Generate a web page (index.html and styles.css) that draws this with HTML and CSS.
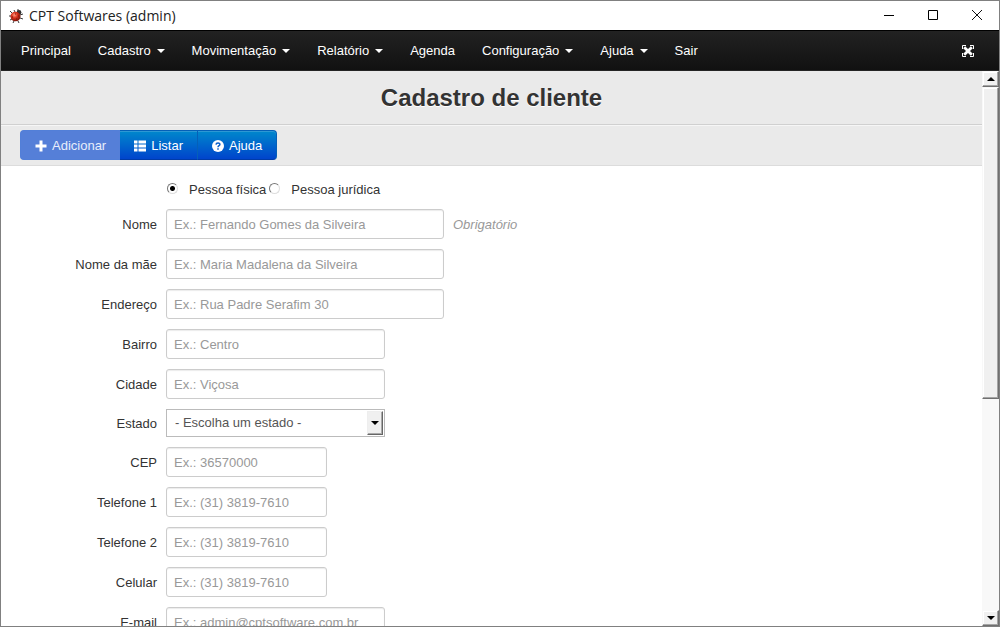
FILE: index.html
```html
<!DOCTYPE html>
<html lang="pt-BR">
<head>
<meta charset="utf-8">
<meta name="viewport" content="width=device-width, initial-scale=1">
<title>CPT Softwares (admin)</title>
<link rel="stylesheet" href="styles.css">
</head>
<body>
<div class="window">
  <header class="titlebar">
    <svg class="app-icon" width="16" height="16" viewBox="0 0 16 16" aria-hidden="true">
      <defs><radialGradient id="shell" cx="40%" cy="35%" r="65%"><stop offset="0" stop-color="#ff9a80"/><stop offset=".45" stop-color="#d8321c"/><stop offset="1" stop-color="#7a1208"/></radialGradient></defs>
      <path d="M4 5 2 3M3 8H1M4 11l-2 1M6 13l-1 2M10 13l1 2M12 10l3 1M12 7l3-1M7 4 6 2M10 3V1" stroke="#3a3a3a" fill="none"/>
      <circle cx="11" cy="4.500" r="2.400" fill="#333"/>
      <ellipse cx="7.500" cy="8.500" rx="5" ry="4.800" fill="url(#shell)"/>
      <path d="M4 9h1M8 11h1M10 8h1M7 6h1" stroke="#70180e"/>
    </svg>
    <span class="app-title">CPT Softwares (admin)</span>
    <div class="window-buttons">
      <button type="button" aria-label="Minimizar"><svg width="12" height="12" viewBox="0 0 12 12"><path d="M1 5.500h10" stroke="#000" fill="none"/></svg></button>
      <button type="button" aria-label="Maximizar"><svg width="12" height="12" viewBox="0 0 12 12"><path d="M1.500.5h9v9h-9z" stroke="#000" fill="none"/></svg></button>
      <button type="button" aria-label="Fechar"><svg width="12" height="12" viewBox="0 0 12 12"><path d="m1 0 10 10M11 0 1 10" stroke="#111" fill="none"/></svg></button>
    </div>
  </header>

  <nav class="navbar">
    <a href="#">Principal</a>
    <a href="#" class="dropdown">Cadastro</a>
    <a href="#" class="dropdown">Movimentação</a>
    <a href="#" class="dropdown">Relatório</a>
    <a href="#">Agenda</a>
    <a href="#" class="dropdown">Configuração</a>
    <a href="#" class="dropdown">Ajuda</a>
    <a href="#">Sair</a>
    <button type="button" class="fullscreen" aria-label="Tela cheia">
      <svg width="12" height="12" viewBox="0 0 12 12"><path d="M.5 4V.5H4M8 .5h3.500V4M11.500 8v3.500H8M4 11.500H.5V8" stroke="#fff" fill="none"/><path d="m2.200 2.200 7.600 7.600M9.800 2.200 2.200 9.800" stroke="#fff" stroke-width="2.800" fill="none"/></svg>
    </button>
  </nav>

  <div class="body">
    <main class="content">
      <h1 class="page-title">Cadastro de cliente</h1>
      <div class="toolbar">
        <div class="button-group">
          <button type="button" class="tool active"><svg width="12" height="12" viewBox="0 0 12 12"><path d="M4.500.5h3v4h4v3h-4v4h-3v-4h-4v-3h4z" fill="#fff"/></svg>Adicionar</button>
          <button type="button" class="tool"><svg width="12" height="12" viewBox="0 0 12 12"><path d="M0 .5h3.500v3H0zM4.500.5H12v3H4.500zM0 4.500h3.500v3H0zM4.500 4.500H12v3H4.500zM0 8.500h3.500v3H0zM4.500 8.500H12v3H4.500z" fill="#fff"/></svg>Listar</button>
          <button type="button" class="tool"><svg width="12" height="12" viewBox="0 0 12 12"><circle cx="6" cy="6" r="6" fill="#fff"/><path d="M4 4.600C4.200 2.400 8 2.600 7.900 4.500 7.800 5.700 6 5.700 6 7.200M6 8.200v1.500" stroke="#0a5fca" stroke-width="1.500" fill="none"/></svg>Ajuda</button>
        </div>
      </div>

      <form class="client-form">
        <div class="radios">
          <label><input type="radio" name="tipo" checked>Pessoa física</label>
          <label><input type="radio" name="tipo">Pessoa jurídica</label>
        </div>
        <div class="row"><label for="nome">Nome</label><input id="nome" class="large" type="text" placeholder="Ex.: Fernando Gomes da Silveira"><span class="hint">Obrigatório</span></div>
        <div class="row"><label for="mae">Nome da mãe</label><input id="mae" class="large" type="text" placeholder="Ex.: Maria Madalena da Silveira"></div>
        <div class="row"><label for="endereco">Endereço</label><input id="endereco" class="large" type="text" placeholder="Ex.: Rua Padre Serafim 30"></div>
        <div class="row"><label for="bairro">Bairro</label><input id="bairro" class="medium" type="text" placeholder="Ex.: Centro"></div>
        <div class="row"><label for="cidade">Cidade</label><input id="cidade" class="medium" type="text" placeholder="Ex.: Viçosa"></div>
        <div class="row"><label for="estado">Estado</label><span class="select-box medium"><select id="estado"><option>- Escolha um estado -</option></select><span class="select-arrow"></span></span></div>
        <div class="row"><label for="cep">CEP</label><input id="cep" class="small" type="text" placeholder="Ex.: 36570000"></div>
        <div class="row"><label for="tel1">Telefone 1</label><input id="tel1" class="small" type="tel" placeholder="Ex.: (31) 3819-7610"></div>
        <div class="row"><label for="tel2">Telefone 2</label><input id="tel2" class="small" type="tel" placeholder="Ex.: (31) 3819-7610"></div>
        <div class="row"><label for="celular">Celular</label><input id="celular" class="small" type="tel" placeholder="Ex.: (31) 3819-7610"></div>
        <div class="row"><label for="email">E-mail</label><input id="email" class="medium" type="email" placeholder="Ex.: admin@cptsoftware.com.br"></div>
      </form>
    </main>
    <div class="scrollbar">
      <button type="button" class="scroll-button up" aria-label="Rolar para cima"></button>
      <div class="thumb"></div>
      <div class="track"></div>
      <button type="button" class="scroll-button down" aria-label="Rolar para baixo"></button>
    </div>
  </div>
</div>
</body>
</html>
```

FILE: styles.css
```css
* { box-sizing: border-box; }

body {
  margin: 0;
  background: #fff;
  color: #333;
  font: 13px/20px "Liberation Sans", Arial, sans-serif;
}

button, input, select { font: inherit; }
button { margin: 0; padding: 0; border: 0; background: none; }

.window {
  display: flex;
  flex-direction: column;
  height: 100vh;
  border: 1px solid #808080;
  overflow: hidden;
}

/* Title bar */
.titlebar {
  display: flex;
  align-items: center;
  flex: none;
  height: 29px;
  padding-left: 7px;
}
.app-title {
  margin-left: 5px;
  color: #222;
  font: 14px/20px "Open Sans", "Noto Sans", sans-serif;
}
.window-buttons { display: flex; margin-left: auto; }
.window-buttons button {
  display: flex;
  align-items: center;
  justify-content: center;
  width: 44px;
  height: 29px;
}

/* Menu */
.navbar {
  display: flex;
  align-items: center;
  flex: none;
  height: 41px;
  padding: 0 25px 0 20px;
  gap: 27px;
  border-top: 1px solid #000;
  border-bottom: 1px solid #252525;
  background: linear-gradient(#222, #111);
}
.navbar a {
  display: flex;
  align-items: center;
  gap: 6px;
  padding-top: 1px;
  color: #fff;
  text-decoration: none;
}
.dropdown::after {
  content: "";
  border: 4px solid transparent;
  border-top-color: #fff;
  border-bottom: 0;
}
.fullscreen { display: flex; margin-left: auto; }

/* Page */
.body { display: flex; flex: 1; min-height: 0; }
.content { flex: 1; min-width: 0; overflow: hidden; }

.page-title {
  margin: 0;
  padding: 12px 0 11px;
  border-bottom: 1px solid #d0d0d0;
  background: #eaeaea;
  text-align: center;
  font-size: 24px;
  line-height: 30px;
  text-shadow: 0 1px 0 #fff;
}

.toolbar {
  padding: 4px 19px 5px;
  border-top: 1px solid #f6f6f6;
  border-bottom: 1px solid #dcdcdc;
  background: #eaeaea;
}
.button-group { display: flex; }
.tool {
  display: flex;
  align-items: center;
  gap: 5px;
  height: 30px;
  padding: 1px 14px 0;
  border: 1px solid #0560b8;
  border-left-width: 0;
  border-bottom-color: #003ba8;
  background: linear-gradient(#0088cc, #0044cc);
  color: #fff;
  box-shadow: inset 0 1px 0 #2d98d4;
}
.tool:first-child { border-left-width: 1px; border-radius: 4px 0 0 4px; }
.tool:last-child { border-radius: 0 4px 4px 0; }
.tool.active {
  border-color: #527fd8;
  border-right-width: 0;
  background: #557fd8;
  color: #e8eefb;
  box-shadow: none;
}

/* Form */
.client-form {
  display: flex;
  flex-direction: column;
  gap: 10px;
  padding-top: 13px;
}
.radios { display: flex; gap: 3px; padding-left: 166px; }
.radios label {
  display: flex;
  align-items: center;
  gap: 11px;
  height: 20px;
  padding-top: 2px;
}
.radios input {
  appearance: none;
  width: 11px;
  height: 11px;
  margin: 0 0 4px;
  border: 1px solid;
  border-color: #777 #ddd #ddd #777;
  border-radius: 50%;
  background: #fff;
}
.radios input:checked { background: radial-gradient(circle, #000 2px, #fff 3px); }

.row { display: flex; align-items: center; }
.row label {
  width: 156px;
  margin-right: 9px;
  padding-top: 2px;
  text-align: right;
}
.row input {
  height: 30px;
  padding: 0 7px;
  border: 1px solid #ccc;
  border-radius: 3px;
  background: #fff;
  color: #555;
  box-shadow: inset 0 1px 1px #ececec;
}
.row input::placeholder { color: #999; opacity: 1; }
.row .large { width: 278px; }
.row .medium { width: 219px; }
.row .small { width: 161px; }
.hint {
  margin-left: 9px;
  padding-top: 2px;
  color: #999;
  font-style: italic;
}

.select-box { display: grid; height: 28px; border: 1px solid #bbb; }
.select-box select {
  grid-area: 1 / 1;
  appearance: none;
  width: 100%;
  padding: 0 20px 0 8px;
  border: 0;
  border-radius: 0;
  background: #fff;
  color: #555;
}
.select-arrow {
  display: flex;
  grid-area: 1 / 1;
  align-items: center;
  justify-content: center;
  justify-self: end;
  width: 16px;
  margin: 1px;
  border: 1px solid;
  border-color: #eee #666 #666 #eee;
  background: #f0f0f0;
  box-shadow: inset -1px -1px 0 #aaa;
  pointer-events: none;
}
.select-arrow::after {
  content: "";
  border: 4px solid transparent;
  border-top-color: #000;
  border-bottom: 0;
}

/* Scrollbar */
.scrollbar { display: flex; flex-direction: column; flex: none; width: 17px; }
.scroll-button, .thumb {
  border: 1px solid;
  border-color: #f8f8f8 #707070 #707070 #f8f8f8;
  background: #f0f0f0;
  box-shadow: inset -1px -1px 0 #a5a5a5, inset 1px 1px 0 #fff;
}
.scroll-button {
  display: flex;
  flex: none;
  align-items: center;
  justify-content: center;
  height: 16px;
}
.scroll-button::after { content: ""; border: 4px solid transparent; }
.up::after { border-top: 0; border-bottom-color: #000; }
.down::after { border-bottom: 0; border-top-color: #000; }
.thumb { flex: 25; }
.track { flex: 17; background: #f8f8f8; }
```
